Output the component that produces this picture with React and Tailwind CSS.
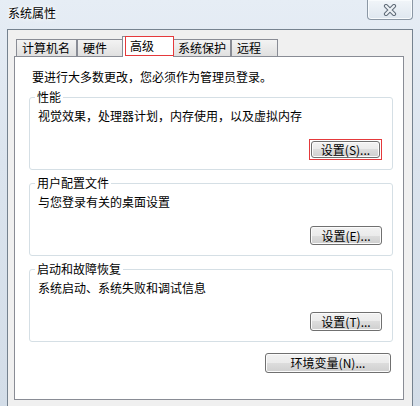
import React from 'react';

const font = "font-['Noto_Sans_CJK_SC','Noto_Sans',sans-serif]";

// Win7 风格的按钮
const WinButton = ({ label, className = '' }) => (
  <button
    className={`flex items-center justify-center rounded-[3px] border border-[#707070] bg-[linear-gradient(#f2f2f2_0%,#ebebeb_50%,#dddddd_50%,#cfcfcf_100%)] shadow-[inset_0_0_0_1px_#fbfbfb] text-[12px] leading-[14px] text-black ${className}`}
  >
    {label}
  </button>
);

const Tab = ({ label, width }) => (
  <div
    className={`h-[17px] shrink-0 border-x border-t border-[#898c95] bg-[linear-gradient(#f3f3f3,#e0e0e0)] pl-[5px] text-[12px] leading-[15px] text-black ${width}`}
  >
    {label}
  </div>
);

const GroupBox = ({ title, desc, children, className = '' }) => (
  <fieldset className={`rounded-[3px] border border-[#d5dfe5] ${className}`}>
    <legend className="ml-[5px] px-[2px] text-[12px] leading-[16px] text-black">{title}</legend>
    <div className="mt-[3px] pl-[8px] text-[12px] leading-[16px] text-black">{desc}</div>
    {children}
  </fieldset>
);

export default function App() {
  return (
    <div className={`flex h-[406px] w-[420px] flex-col overflow-hidden bg-[linear-gradient(180deg,#e6edf5_0%,#dbe4ee_40%,#d3dde8_100%)] ${font}`}>
      {/* 标题栏 */}
      <div className="flex h-[29px] shrink-0 items-start justify-between">
        <span className="ml-[8px] mt-[5px] text-[12px] leading-[16px] text-black [text-shadow:0_0_6px_#fff,0_0_3px_#fff]">
          系统属性
        </span>
        <div className="mr-[7px] flex h-[20px] w-[46px] items-center justify-center rounded-b-[4px] border border-t-0 border-[#8b97a4] bg-[linear-gradient(#f1f5f9,#dfe7ef)] shadow-[inset_0_0_0_1px_#f8fbfd]">
          <svg width="14" height="12" viewBox="0 0 14 12">
            <path d="M3 2 L11 10 M11 2 L3 10" stroke="#5f6b77" strokeWidth="4.2" strokeLinecap="round" />
            <path d="M3 2 L11 10 M11 2 L3 10" stroke="#eef2f6" strokeWidth="2.2" strokeLinecap="round" />
          </svg>
        </div>
      </div>

      {/* 客户区 */}
      <div className="mx-[7px] flex-1 border-x border-t border-[#75828f] bg-[#f0f0f0] pl-[6px] pr-[8px] pt-[6px]">
        {/* 选项卡 */}
        <div className="flex h-[20px] items-end pl-[2px]">
          <Tab label="计算机名" width="w-[61px]" />
          <Tab label="硬件" width="w-[47px]" />
          <div className="relative z-10 -mx-[2px] -mb-[1px] h-[21px] w-[52px] shrink-0 border-x border-t border-[#898c95] bg-white pl-[7px] pt-[1px] text-[12px] leading-[15px] text-black">
            高级
            <div className="absolute -right-[1px] -top-[1px] bottom-[1px] left-[2px] border border-[#e5393b]" />
          </div>
          <Tab label="系统保护" width="w-[59px]" />
          <Tab label="远程" width="w-[47px]" />
        </div>

        {/* 面板 */}
        <div className="h-[344px] w-[390px] border border-[#898c95] bg-white pl-[14px] pr-[10px] pt-[12px]">
          <p className="ml-[3px] text-[12px] leading-[16px] text-black">要进行大多数更改，您必须作为管理员登录。</p>

          <GroupBox title="性能" desc="视觉效果，处理器计划，内存使用，以及虚拟内存" className="mt-[4px] pb-[9px]">
            <div className="mt-[15px] flex justify-end pr-[10px]">
              <div className="h-[21px] w-[73px] border border-[#e5393b] p-[1px]">
                <WinButton label="设置(S)..." className="h-full w-full" />
              </div>
            </div>
          </GroupBox>

          <GroupBox title="用户配置文件" desc="与您登录有关的桌面设置" className="mt-[5px] pb-[10px]">
            <div className="mt-[16px] flex justify-end pr-[10px]">
              <WinButton label="设置(E)..." className="h-[19px] w-[72px]" />
            </div>
          </GroupBox>

          <GroupBox title="启动和故障恢复" desc="系统启动、系统失败和调试信息" className="mt-[5px] pb-[10px]">
            <div className="mt-[16px] flex justify-end pr-[10px]">
              <WinButton label="设置(T)..." className="h-[19px] w-[72px]" />
            </div>
          </GroupBox>

          <div className="mt-[11px] flex justify-end pr-[2px]">
            <WinButton label="环境变量(N)..." className="h-[20px] w-[126px]" />
          </div>
        </div>
      </div>
    </div>
  );
}
